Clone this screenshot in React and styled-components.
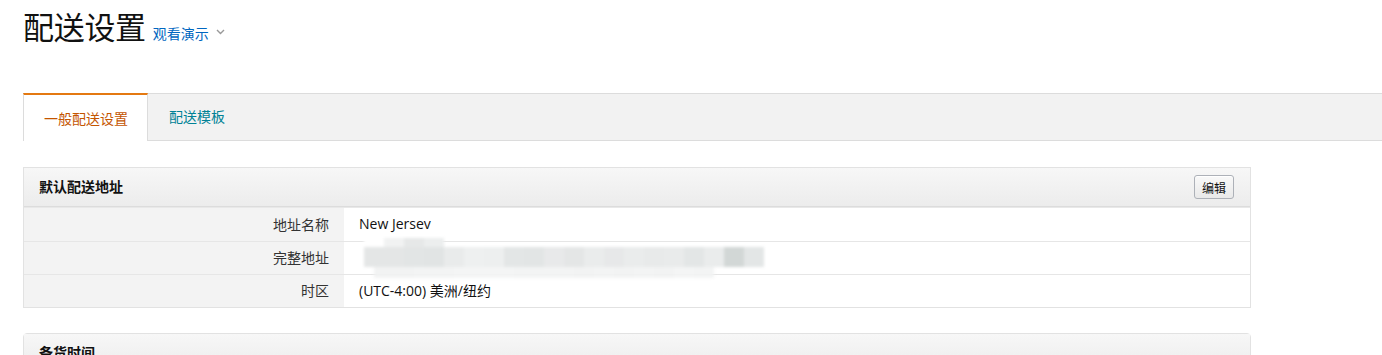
import React from 'react'
import styled, { createGlobalStyle } from 'styled-components'

const GlobalStyle = createGlobalStyle`
  body {
    margin: 0;
    background: #fff;
    font-family: "Open Sans", "Noto Sans CJK SC", sans-serif;
    color: #111;
  }
`

const Page = styled.div`
  padding: 0 0 0 23px;
`

const TitleRow = styled.div`
  display: flex;
  align-items: baseline;
  padding-top: 3px;
  height: 93px;
  box-sizing: border-box;
`

const Title = styled.h1`
  margin: 0;
  font-family: "Noto Sans CJK SC", sans-serif;
  font-weight: 400;
  font-size: 31px;
  color: #111;
  letter-spacing: -0.3px;
`

const DemoLink = styled.a`
  margin-left: 7px;
  font-family: "Noto Sans CJK SC", sans-serif;
  font-size: 14px;
  color: #0066c0;
  text-decoration: none;
  display: flex;
  align-items: center;
  gap: 7px;
`

const Chevron = styled.svg`
  width: 9px;
  height: 6px;
  position: relative;
  top: -1px;
`

const TabBar = styled.div`
  display: flex;
  height: 48px;
  background: #f2f2f2;
  border-top: 1px solid #dcdcdc;
  border-bottom: 1px solid #dcdcdc;
  box-sizing: border-box;
`

const Tab = styled.div`
  display: flex;
  align-items: center;
  padding: 0 21px 2px;
  font-family: "Noto Sans CJK SC", sans-serif;
  font-size: 14px;
  cursor: pointer;
  box-sizing: border-box;
  ${p => p.$active ? `
    background: #fff;
    color: #c45500;
    border-top: 2px solid #e47911;
    border-left: 1px solid #dcdcdc;
    border-right: 1px solid #dcdcdc;
    margin: -1px 0 -1px 0;
    height: 48px;
    padding: 0 19px 1px 20px;
  ` : `
    color: #008296;
  `}
`

const Panel = styled.div`
  width: 1228px;
  margin-top: ${p => p.$top}px;
  border: 1px solid #e2e2e2;
  border-radius: ${p => p.$round ? '4px 4px 0 0' : '0'};
  box-sizing: border-box;
`

const PanelHeader = styled.div`
  display: flex;
  align-items: center;
  justify-content: space-between;
  height: 38px;
  padding: 0 16px 0 15px;
  background: linear-gradient(#f7f7f7, #ececec);
  border-bottom: 1px solid #dcdcdc;
  box-shadow: 0 1px 0 #e8e8e8;
`

const PanelTitle = styled.h3`
  margin: 0 0 2px;
  font-family: "Noto Sans CJK SC", sans-serif;
  font-size: 14px;
  font-weight: 700;
  color: #111;
`

const EditButton = styled.button`
  height: 24px;
  padding: 0 7px;
  font-family: "Noto Sans CJK SC", sans-serif;
  font-size: 12px;
  color: #111;
  background: linear-gradient(#f9f9f9, #e9e9e9);
  border: 1px solid #adb1b8;
  border-radius: 3px;
  box-shadow: inset 0 1px 0 #fff;
`

const Row = styled.div`
  display: grid;
  grid-template-columns: 320px 1fr;
  height: 33px;
  box-sizing: border-box;
  border-top: ${p => p.$first ? 'none' : '1px solid #e6e6e6'};
  margin-top: ${p => p.$first ? '1px' : '0'};
`

const Label = styled.div`
  background: #f3f3f3;
  padding: 0 15px 2px 0;
  font-family: "Noto Sans CJK SC", sans-serif;
  font-size: 14px;
  color: #333;
  display: flex;
  align-items: center;
  justify-content: flex-end;
`

const Value = styled.div`
  padding: 0 0 2px 15px;
  font-size: 14px;
  color: #111;
  display: flex;
  align-items: center;
  position: relative;
`

const Smudge = styled.div`
  position: absolute;
  left: 8px;
  top: -4px;
  width: 430px;
  height: 40px;
  display: flex;
  flex-direction: column;
  filter: blur(1.5px);
`

const SmudgeRow = styled.div`
  display: flex;
  height: ${p => p.$h}px;
  padding-left: ${p => p.$pad}px;
  opacity: ${p => p.$fade};
`

const Pixel = styled.div`
  width: 20px;
  height: 100%;
  background: ${p => p.$shade};
`

const topShades = ['#fff', '#f1f2f2', '#e6e8e8', '#eceeee']
const midShades = ['#e4e6e6', '#e4e6e6', '#e2e5e5', '#e1e4e4', '#e9ebeb', '#eef0f0', '#edefef', '#e3e6e6', '#e2e5e5', '#e8e9ea', '#e4e6e6', '#eaecec', '#e7e8e9', '#eaecec', '#e8eaea', '#e9ebeb', '#e3e6e6', '#eaecec', '#d2d7d6', '#e3e6e6']
const lowShades = ['#f1f2f2', '#f1f2f2', '#f2f3f3', '#f2f3f3', '#f3f4f4', '#f3f4f4', '#f3f4f4', '#f2f3f3', '#f2f3f3', '#f2f3f3', '#f1f2f2', '#f2f3f3', '#f1f2f2', '#f2f3f3', '#f1f2f2', '#f3f4f4', '#f2f3f3']

const App = () => {
  return (
    <Page>
      <GlobalStyle />
      <TitleRow>
        <Title>配送设置</Title>
        <DemoLink href="#">
          观看演示
          <Chevron viewBox="0 0 9 6">
            <path d="M1 1l3.5 3.5L8 1" fill="none" stroke="#999" strokeWidth="1.4" />
          </Chevron>
        </DemoLink>
      </TitleRow>

      <TabBar>
        <Tab $active>一般配送设置</Tab>
        <Tab>配送模板</Tab>
      </TabBar>

      <Panel $top={26}>
        <PanelHeader>
          <PanelTitle>默认配送地址</PanelTitle>
          <EditButton>编辑</EditButton>
        </PanelHeader>
        <Row $first>
          <Label>地址名称</Label>
          <Value>New Jersev</Value>
        </Row>
        <Row>
          <Label>完整地址</Label>
          <Value>
            <Smudge>
              <SmudgeRow $h={9} $pad={12} $fade={1}>
                {topShades.map((s, i) => <Pixel key={i} $shade={s} />)}
              </SmudgeRow>
              <SmudgeRow $h={20} $pad={12} $fade={1}>
                {midShades.map((s, i) => <Pixel key={i} $shade={s} />)}
              </SmudgeRow>
              <SmudgeRow $h={11} $pad={22} $fade={0.9}>
                {lowShades.map((s, i) => <Pixel key={i} $shade={s} />)}
              </SmudgeRow>
            </Smudge>
          </Value>
        </Row>
        <Row>
          <Label>时区</Label>
          <Value>(UTC-4:00) 美洲/纽约</Value>
        </Row>
      </Panel>

      <Panel $top={25} $round>
        <PanelHeader>
          <PanelTitle>备货时间</PanelTitle>
        </PanelHeader>
      </Panel>
    </Page>
  )
}

export default App
